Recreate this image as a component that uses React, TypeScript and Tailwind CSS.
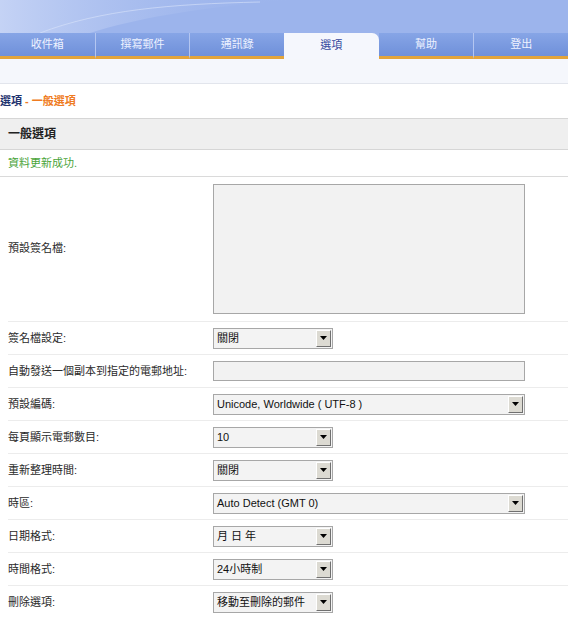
import React from 'react'

const tabs = ['收件箱', '撰寫郵件', '通訊錄', '選項', '幫助', '登出']

function Select({ value, wide }: { value: string; wide?: boolean }) {
  return (
    <div
      className={`flex h-[21px] items-stretch border border-[#a7a7a7] bg-[#f3f3f3] ${wide ? 'w-[312px]' : 'w-[120px]'}`}
    >
      <span className="flex flex-1 items-center truncate pl-[3px] text-[11px] text-[#111]">{value}</span>
      <span className="m-px flex w-[15px] items-center justify-center border border-t-white border-l-white border-r-[#707070] border-b-[#707070] bg-[#dcdad2]">
        <svg width="7" height="4" viewBox="0 0 7 4">
          <path d="M0 0h7L3.5 4z" fill="#000" />
        </svg>
      </span>
    </div>
  )
}

function Row({ label, children, tall }: { label: string; children: React.ReactNode; tall?: boolean }) {
  return (
    <div
      className={`ml-[8px] flex items-center border-b border-[#ececec] ${tall ? 'h-[145px] pb-px' : 'h-[33px]'}`}
    >
      <div className="w-[205px] shrink-0 text-[11px] text-[#2a2a2a]">{label}</div>
      <div>{children}</div>
    </div>
  )
}

export default function App() {
  return (
    <div className="h-[618px] w-[568px] overflow-hidden bg-white font-['Liberation_Sans','Noto_Sans_CJK_TC',sans-serif]">
      {/* top banner */}
      <div className="relative h-[33px] overflow-hidden bg-[#9cb4ec]">
        <svg className="absolute inset-0" width="568" height="33" viewBox="0 0 568 33">
          <defs>
            <linearGradient id="sw" x1="0" x2="1" y1="0" y2="0">
              <stop offset="0" stopColor="#c9d6f6" stopOpacity="0.9" />
              <stop offset="1" stopColor="#9cb4ec" stopOpacity="0" />
            </linearGradient>
          </defs>
          <path d="M0 0h300C230 4 150 14 90 33H0z" fill="url(#sw)" />
          <path d="M40 33C100 10 170 4 260 2" stroke="#dbe4fa" strokeOpacity="0.6" fill="none" />
        </svg>
      </div>

      {/* tabs */}
      <div className="grid h-[26px] grid-cols-6 bg-[#9cb4ec]">
        {tabs.map((t, i) =>
          i === 3 ? (
            <div
              key={t}
              className="flex items-center justify-center rounded-tr-[7px] bg-[#f5f7fd] pb-[2px] text-[11px] text-[#34489e]"
            >
              {t}
            </div>
          ) : (
            <div
              key={t}
              className={`flex items-center justify-center border-b-[3px] border-b-[#e2a43c] bg-gradient-to-b from-[#87a5e6] to-[#6f90da] text-[11px] text-[#eef2ff] ${i > 0 && i !== 4 ? 'border-l border-l-[#b4c6f1]' : ''}`}
            >
              {t}
            </div>
          )
        )}
      </div>
      <div className="h-[25px] border-b border-[#e2e5ec] bg-[#f5f7fc]" />

      {/* breadcrumb */}
      <div className="flex h-[34px] items-center pt-px text-[11px] font-bold">
        <span className="text-[#1f3470]">選項</span>
        <span className="text-[#ef7b22]">&nbsp;-&nbsp;一般選項</span>
      </div>

      {/* section */}
      <div className="flex h-[32px] items-center border-y border-[#d6d6d6] bg-[#efefef] pl-[8px] text-[12px] font-bold text-[#222]">
        一般選項
      </div>
      <div className="flex h-[27px] items-center border-b border-[#dadada] pl-[8px] text-[11px] text-[#4aa43a]">
        資料更新成功.
      </div>

      <Row label="預設簽名檔:" tall>
        <textarea className="block h-[130px] w-[312px] resize-none border border-[#a7a7a7] bg-[#f2f2f2] outline-none" />
      </Row>
      <Row label="簽名檔設定:">
        <Select value="關閉" />
      </Row>
      <Row label="自動發送一個副本到指定的電郵地址:">
        <div className="h-[20px] w-[312px] border border-[#a7a7a7] bg-[#f2f2f2]" />
      </Row>
      <Row label="預設編碼:">
        <Select value="Unicode, Worldwide ( UTF-8 )" wide />
      </Row>
      <Row label="每頁顯示電郵數目:">
        <Select value="10" />
      </Row>
      <Row label="重新整理時間:">
        <Select value="關閉" />
      </Row>
      <Row label="時區:">
        <Select value="Auto Detect (GMT 0)" wide />
      </Row>
      <Row label="日期格式:">
        <Select value="月 日 年" />
      </Row>
      <Row label="時間格式:">
        <Select value="24小時制" />
      </Row>
      <Row label="刪除選項:">
        <Select value="移動至刪除的郵件" />
      </Row>
    </div>
  )
}
